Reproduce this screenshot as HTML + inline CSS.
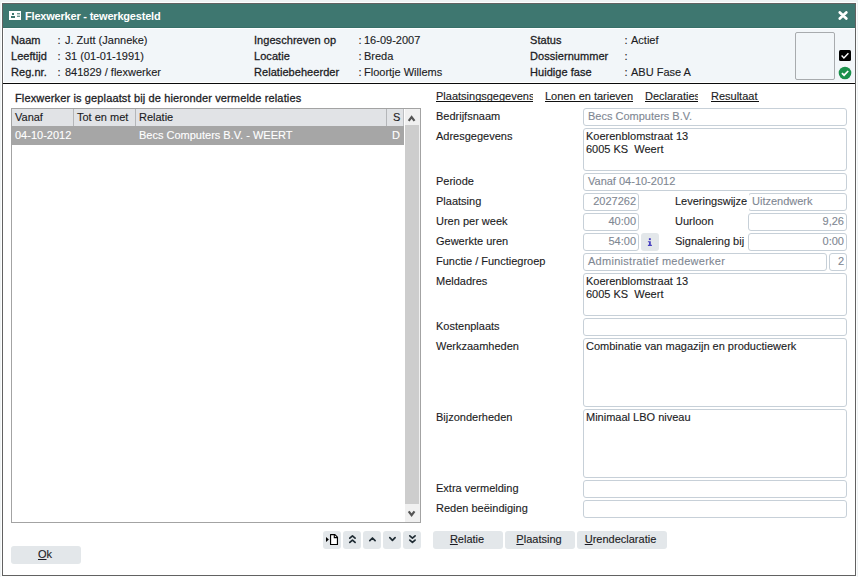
<!DOCTYPE html>
<html><head><meta charset="utf-8">
<style>
html,body{margin:0;padding:0}
body{width:858px;height:577px;position:relative;overflow:hidden;background:#eef2f3;font-family:"Liberation Sans",sans-serif;font-size:11px;color:#1c1c24}
div,span{box-sizing:border-box}
.a{position:absolute}
.t{position:absolute;font-size:11px;line-height:13px;white-space:nowrap;-webkit-text-stroke:0.12px currentColor}
.b{-webkit-text-stroke:0.28px currentColor;letter-spacing:0.05px}
.in{position:absolute;background:#fff;border:1px solid #c7d0d8;border-radius:3px}
.g{color:#7f8893}
.btn{position:absolute;background:#e3e7ea;border-radius:3px;height:18px;top:531px}
.u{text-decoration:underline}
</style></head><body>
<!-- window frame -->
<div class="a" style="left:1px;top:2px;width:856px;height:575px;background:#fdfefe"></div>
<div class="a" style="left:2px;top:3px;width:854px;height:573px;border:1px solid #626262;background:#fff"></div>
<!-- title bar -->
<div class="a" style="left:3px;top:4px;width:852px;height:24px;background:#3e7770;border-bottom:1px solid #387069"></div>
<svg class="a" style="left:9px;top:11px" width="12" height="9" viewBox="0 0 12 9">
<rect x="0" y="0" width="12" height="9" fill="#fff"/>
<rect x="3" y="2" width="2" height="2" fill="#3e7770"/>
<rect x="2" y="5" width="4" height="2" fill="#3e7770"/>
<rect x="8" y="2" width="3" height="1" fill="#6f9a95"/>
<rect x="8" y="3" width="3" height="2" fill="#c8d6d4"/>
<rect x="8" y="5" width="3" height="1" fill="#6f9a95"/>
</svg>
<div class="t" style="left:25px;top:10px;color:#fff;font-weight:bold;-webkit-text-stroke:0;letter-spacing:-0.2px">Flexwerker - tewerkgesteld</div>
<svg class="a" style="left:838px;top:11px" width="10" height="9" viewBox="0 0 10 9">
<path d="M1.8 1.4 L8.3 7.6 M8.3 1.4 L1.8 7.6" stroke="#fff" stroke-width="2.7" stroke-linecap="round"/>
</svg>
<!-- header -->
<div class="a" style="left:3px;top:28px;width:852px;height:55px;background:#f2f6f9;border:1px solid #fff;border-right:0"></div>
<div class="a" style="left:3px;top:83px;width:852px;height:1px;background:#0a0a0a"></div>

<div class="t b" style="left:11px;top:34px">Naam</div>
<div class="t b" style="left:11px;top:50px">Leeftijd</div>
<div class="t b" style="left:11px;top:66px">Reg.nr.</div>
<div class="t" style="left:57.5px;top:34px">:</div><div class="t" style="left:65px;top:34px">J. Zutt (Janneke)</div>
<div class="t" style="left:57.5px;top:50px">:</div><div class="t" style="left:65px;top:50px">31 (01-01-1991)</div>
<div class="t" style="left:57.5px;top:66px">:</div><div class="t" style="left:65px;top:66px">841829 / flexwerker</div>

<div class="t b" style="left:254px;top:34px">Ingeschreven op</div>
<div class="t b" style="left:254px;top:50px">Locatie</div>
<div class="t b" style="left:254px;top:66px">Relatiebeheerder</div>
<div class="t" style="left:358.5px;top:34px">:</div><div class="t" style="left:364px;top:34px">16-09-2007</div>
<div class="t" style="left:358.5px;top:50px">:</div><div class="t" style="left:364px;top:50px">Breda</div>
<div class="t" style="left:358.5px;top:66px">:</div><div class="t" style="left:364px;top:66px">Floortje Willems</div>

<div class="t b" style="left:530px;top:34px">Status</div>
<div class="t b" style="left:530px;top:50px">Dossiernummer</div>
<div class="t b" style="left:530px;top:66px">Huidige fase</div>
<div class="t" style="left:624.5px;top:34px">:</div><div class="t" style="left:631px;top:34px">Actief</div>
<div class="t" style="left:624.5px;top:50px">:</div>
<div class="t" style="left:624.5px;top:66px">:</div><div class="t" style="left:631px;top:66px">ABU Fase A</div>

<div class="a" style="left:795px;top:32px;width:40px;height:48px;border:1px solid #a8abae;border-radius:2px"></div>
<svg class="a" style="left:839px;top:50px" width="12" height="11" viewBox="0 0 12 11">
<rect x="0" y="0" width="12" height="11" rx="1.5" fill="#000"/>
<path d="M2.6 5.6 L4.9 7.9 L9.4 3.3" stroke="#fff" stroke-width="1.4" fill="none"/>
</svg>
<svg class="a" style="left:838px;top:66px" width="14" height="14" viewBox="0 0 14 14">
<circle cx="7" cy="7" r="6.3" fill="#19904b"/>
<path d="M3.9 7.1 L6.1 9.2 L10.2 5" stroke="#fff" stroke-width="1.7" fill="none"/>
</svg>

<!-- left panel -->
<div class="t b" style="left:15px;top:92px;letter-spacing:0.14px">Flexwerker is geplaatst bij de hieronder vermelde relaties</div>
<div class="a" style="left:11px;top:108px;width:410px;height:415px;border:1px solid #a3a3a3;background:#fff"></div>
<div class="a" style="left:12px;top:109px;width:391px;height:17px;background:#e1e3e6"></div>
<div class="a" style="left:403px;top:109px;width:1px;height:17px;background:#bdbfc2"></div>
<div class="a" style="left:73px;top:109px;width:1px;height:17px;background:#b4b6b9"></div>
<div class="a" style="left:135px;top:109px;width:1px;height:17px;background:#b4b6b9"></div>
<div class="a" style="left:386px;top:109px;width:1px;height:17px;background:#b4b6b9"></div>
<div class="t" style="left:15px;top:111px">Vanaf</div>
<div class="t" style="left:77px;top:111px">Tot en met</div>
<div class="t" style="left:139px;top:111px">Relatie</div>
<div class="t" style="left:393px;top:111px">S</div>
<div class="a" style="left:12px;top:126px;width:392px;height:19px;background:#a6a6a6"></div>
<div class="t" style="left:15px;top:129px;color:#fff">04-10-2012</div>
<div class="t" style="left:139px;top:129px;color:#fff">Becs Computers B.V. - WEERT</div>
<div class="t" style="left:392px;top:129px;color:#fff">D</div>
<!-- scrollbar -->
<div class="a" style="left:405px;top:109px;width:15px;height:413px;background:#f0f0f0"></div>
<div class="a" style="left:405px;top:125px;width:14px;height:379px;background:#cdcdcd"></div>
<svg class="a" style="left:405px;top:109px" width="15" height="16" viewBox="0 0 15 16">
<path d="M3.7 11.9 L6.6 8.0 L9.5 11.9" stroke="#555" stroke-width="2.2" fill="none"/>
</svg>
<svg class="a" style="left:405px;top:505px" width="15" height="16" viewBox="0 0 15 16">
<path d="M3.7 6.4 L6.6 10.2 L9.5 6.4" stroke="#555" stroke-width="2.2" fill="none"/>
</svg>
<!-- nav buttons -->
<div class="btn" style="left:323px;width:18px"></div>
<div class="btn" style="left:343px;width:18px"></div>
<div class="btn" style="left:363px;width:18px"></div>
<div class="btn" style="left:383px;width:18px"></div>
<div class="btn" style="left:403px;width:18px"></div>
<svg class="a" style="left:323px;top:531px" width="18" height="18" viewBox="0 0 18 18">
<path d="M3 6.1 L5.9 8.6 L3 11.1 Z" fill="#000"/>
<path d="M7.55 3.55 H11.9 L14.45 6.1 V13.45 H7.55 Z" fill="#fff" stroke="#000" stroke-width="1.15" stroke-linejoin="round"/>
<path d="M11.3 3.6 V6.65 H14.4" stroke="#000" stroke-width="1.1" fill="none"/>
</svg>
<svg class="a" style="left:343px;top:531px" width="18" height="18" viewBox="0 0 18 18">
<path d="M6.8 7.2 L9.45 4.95 L12.1 7.2 M6.8 11.4 L9.45 9.15 L12.1 11.4" stroke="#1f2b33" stroke-width="1.7" stroke-linecap="round" stroke-linejoin="round" fill="none"/>
</svg>
<svg class="a" style="left:363px;top:531px" width="18" height="18" viewBox="0 0 18 18">
<path d="M6.8 9.6 L9.45 7.0 L12.1 9.6" stroke="#1f2b33" stroke-width="1.7" stroke-linecap="round" stroke-linejoin="round" fill="none"/>
</svg>
<svg class="a" style="left:383px;top:531px" width="18" height="18" viewBox="0 0 18 18">
<path d="M6.8 6.7 L9.45 9.4 L12.1 6.7" stroke="#1f2b33" stroke-width="1.7" stroke-linecap="round" stroke-linejoin="round" fill="none"/>
</svg>
<svg class="a" style="left:403px;top:531px" width="18" height="18" viewBox="0 0 18 18">
<path d="M6.8 4.8 L9.45 7.1 L12.1 4.8 M6.8 9.1 L9.45 11.4 L12.1 9.1" stroke="#1f2b33" stroke-width="1.7" stroke-linecap="round" stroke-linejoin="round" fill="none"/>
</svg>
<div class="btn" style="left:11px;top:546px;width:70px"></div>
<div class="t" style="left:10px;top:548px;width:70px;text-align:center"><span class="u">O</span>k</div>

<!-- right panel tabs -->
<div class="a" style="left:436px;top:90px;width:97px;height:12px;overflow:hidden;border-bottom:1px solid #111"><div class="t" style="left:0;top:0">Plaatsingsgegevens</div></div>
<div class="a" style="left:545px;top:90px;width:88px;height:12px;overflow:hidden;border-bottom:1px solid #111"><div class="t" style="left:0;top:0">Lonen en tarieven</div></div>
<div class="a" style="left:645px;top:90px;width:53px;height:12px;overflow:hidden;border-bottom:1px solid #111"><div class="t" style="left:0;top:0">Declaraties</div></div>
<div class="a" style="left:711px;top:90px;width:48px;height:12px;overflow:hidden;border-bottom:1px solid #111"><div class="t" style="left:0;top:0">Resultaat</div></div>

<!-- form labels -->
<div class="t" style="left:436px;top:110px">Bedrijfsnaam</div>
<div class="t" style="left:436px;top:130px">Adresgegevens</div>
<div class="t" style="left:436px;top:175px">Periode</div>
<div class="t" style="left:436px;top:195px">Plaatsing</div>
<div class="t" style="left:436px;top:215px">Uren per week</div>
<div class="t" style="left:436px;top:235px">Gewerkte uren</div>
<div class="t" style="left:436px;top:255px">Functie / Functiegroep</div>
<div class="t" style="left:436px;top:275px">Meldadres</div>
<div class="t" style="left:436px;top:320px">Kostenplaats</div>
<div class="t" style="left:436px;top:340px">Werkzaamheden</div>
<div class="t" style="left:436px;top:411px">Bijzonderheden</div>
<div class="t" style="left:436px;top:482px">Extra vermelding</div>
<div class="t" style="left:436px;top:502px">Reden beëindiging</div>

<!-- inputs -->
<div class="in" style="left:583px;top:108px;width:264px;height:18px"></div>
<div class="t g" style="left:588px;top:110px">Becs Computers B.V.</div>
<div class="in" style="left:583px;top:128px;width:264px;height:43px"></div>
<div class="t" style="left:586px;top:130px">Koerenblomstraat 13</div>
<div class="t" style="left:586px;top:143px">6005 KS&nbsp; Weert</div>
<div class="in" style="left:583px;top:173px;width:264px;height:18px"></div>
<div class="t g" style="left:588px;top:175px">Vanaf 04-10-2012</div>

<div class="in" style="left:583px;top:193px;width:56px;height:18px"></div>
<div class="t g" style="left:583px;top:195px;width:53px;text-align:right">2027262</div>
<div class="in" style="left:748px;top:193px;width:99px;height:18px"></div>
<div class="t" style="left:675px;top:193px;padding-top:2px;height:18px;width:74px;background:#fff">Leveringswijze</div>
<div class="t g" style="left:752px;top:195px">Uitzendwerk</div>

<div class="in" style="left:583px;top:213px;width:56px;height:18px"></div>
<div class="t g" style="left:583px;top:215px;width:53px;text-align:right">40:00</div>
<div class="t" style="left:675px;top:215px">Uurloon</div>
<div class="in" style="left:748px;top:213px;width:99px;height:18px"></div>
<div class="t g" style="left:748px;top:215px;width:96px;text-align:right">9,26</div>

<div class="in" style="left:583px;top:233px;width:56px;height:18px"></div>
<div class="t g" style="left:583px;top:235px;width:53px;text-align:right">54:00</div>
<div class="a" style="left:641px;top:233px;width:18px;height:18px;background:#e3e7ea;border-radius:3px"></div>
<svg class="a" style="left:641px;top:233px" width="18" height="18" viewBox="0 0 18 18"><rect x="7.9" y="5.2" width="1.9" height="1.9" fill="#4840c0"/><path d="M6.9 8.2 H9.8 V11.7 H10.9 V12.9 H6.9 V11.7 H8.0 V9.3 H6.9 Z" fill="#4840c0"/></svg>
<div class="t" style="left:675px;top:235px">Signalering bij</div>
<div class="in" style="left:748px;top:233px;width:99px;height:18px"></div>
<div class="t g" style="left:748px;top:235px;width:96px;text-align:right">0:00</div>

<div class="in" style="left:583px;top:253px;width:244px;height:18px"></div>
<div class="t g" style="left:588px;top:255px;letter-spacing:0.28px">Administratief medewerker</div>
<div class="in" style="left:829px;top:253px;width:18px;height:18px"></div>
<div class="t g" style="left:829px;top:255px;width:15px;text-align:right">2</div>

<div class="in" style="left:583px;top:273px;width:264px;height:43px"></div>
<div class="t" style="left:586px;top:275px">Koerenblomstraat 13</div>
<div class="t" style="left:586px;top:288px">6005 KS&nbsp; Weert</div>
<div class="in" style="left:583px;top:318px;width:264px;height:18px"></div>
<div class="in" style="left:583px;top:338px;width:264px;height:69px"></div>
<div class="t" style="left:586px;top:340px">Combinatie van magazijn en productiewerk</div>
<div class="in" style="left:583px;top:409px;width:264px;height:69px"></div>
<div class="t" style="left:586px;top:411px">Minimaal LBO niveau</div>
<div class="in" style="left:583px;top:480px;width:264px;height:18px"></div>
<div class="in" style="left:583px;top:500px;width:264px;height:18px"></div>

<!-- bottom buttons -->
<div class="btn" style="left:433px;width:70px"></div>
<div class="t" style="left:432px;top:533px;width:70px;text-align:center"><span class="u">R</span>elatie</div>
<div class="btn" style="left:505px;width:70px"></div>
<div class="t" style="left:504px;top:533px;width:70px;text-align:center"><span class="u">P</span>laatsing</div>
<div class="btn" style="left:577px;width:90px"></div>
<div class="t" style="left:575.5px;top:533px;width:90px;text-align:center"><span class="u">U</span>rendeclaratie</div>
</body></html>
